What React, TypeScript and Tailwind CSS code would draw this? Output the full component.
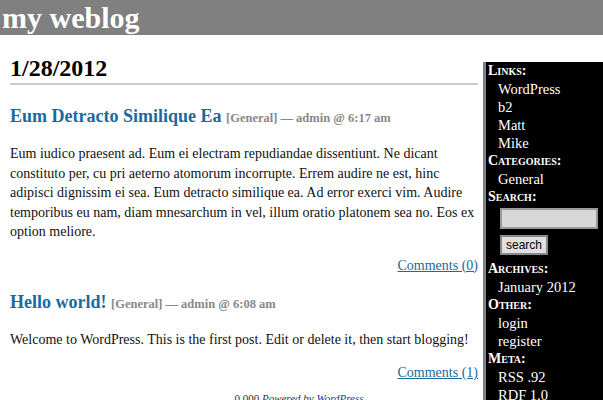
import React from 'react';

const serif = "font-['Liberation_Serif','Times_New_Roman',serif]";

function Post({ title, time, body, comments, gap }: { title: string; time: string; body: string; comments: string; gap: string }) {
    return (
        <div className={gap}>
            <h3 className="text-[18px] font-bold leading-[24px] text-[#1a6aa0]">
                {title}{' '}
                <span className="text-[12.5px] font-bold text-[#888]">[General] — admin @ {time}</span>
            </h3>
            <p className="mt-[14px] text-[14px] leading-[19.5px] text-[#111]">{body}</p>
            <div className="mt-[14px] text-right text-[14px] leading-[20px]">
                <a href="#" className="text-[#1a6aa0] underline">{comments}</a>
            </div>
        </div>
    );
}

function SideBlock({ title, items }: { title: string; items: string[] }) {
    return (
        <div>
            <div className="text-[14px] font-bold leading-[18px] [font-variant:small-caps]">{title}:</div>
            {items.map((i) => (
                <div key={i} className="pl-[10px] text-[14.5px] leading-[18px]">{i}</div>
            ))}
        </div>
    );
}

export default function App() {
    return (
        <div className={`h-[400px] w-[603px] overflow-hidden bg-white ${serif}`}>
            {/* Header */}
            <div className="h-[35px] bg-[#808080]">
                <h1 className="pl-[2px] text-[30px] font-bold leading-[36px] text-white">my weblog</h1>
            </div>

            <div className="flex">
                {/* Main column */}
                <div className="w-[478px] shrink-0 pl-[10px]">
                    <h2 className="mt-[21px] border-b-2 border-[#cccccc] pb-[2px] text-[24px] font-bold leading-[25px] text-black">
                        1/28/2012
                    </h2>
                    <Post
                        gap="mt-[19px]"
                        title="Eum Detracto Similique Ea"
                        time="6:17 am"
                        body="Eum iudico praesent ad. Eum ei electram repudiandae dissentiunt. Ne dicant constituto per, cu pri aeterno atomorum incorrupte. Errem audire ne est, hinc adipisci dignissim ei sea. Eum detracto similique ea. Ad error exerci vim. Audire temporibus eu nam, diam mnesarchum in vel, illum oratio platonem sea no. Eos ex option meliore."
                        comments="Comments (0)"
                    />
                    <Post
                        gap="mt-[14px]"
                        title="Hello world!"
                        time="6:08 am"
                        body="Welcome to WordPress. This is the first post. Edit or delete it, then start blogging!"
                        comments="Comments (1)"
                    />
                    <p className="mt-[8px] pl-[110px] text-center text-[11px] leading-[14px] text-[#333]">
                        0.000 <i>Powered by <a href="#" className="text-[#1a3a8a]">WordPress</a></i>
                    </p>
                </div>

                {/* Sidebar */}
                <div className="ml-[5px] mt-[27px] flex-1 border-l-[3px] border-[#808080] bg-black pb-[20px] pl-[2px] text-white">
                    <SideBlock title="Links" items={['WordPress', 'b2', 'Matt', 'Mike']} />
                    <SideBlock title="Categories" items={['General']} />
                    <div className="text-[14px] font-bold leading-[18px] [font-variant:small-caps]">Search:</div>
                    <div className="pb-[4px] pl-[12px]">
                        <div className="mt-[2px] h-[21px] w-[98px] border-2 border-[#999] bg-[#d8d8d8]" />
                        <button className="mt-[6px] h-[20px] border-2 border-[#888] bg-[#e0e0e0] px-[4px] font-['Liberation_Sans',sans-serif] text-[12px] leading-[14px] text-black">
                            search
                        </button>
                    </div>
                    <SideBlock title="Archives" items={['January 2012']} />
                    <SideBlock title="Other" items={['login', 'register']} />
                    <SideBlock title="Meta" items={['RSS .92', 'RDF 1.0']} />
                </div>
            </div>
        </div>
    );
}
